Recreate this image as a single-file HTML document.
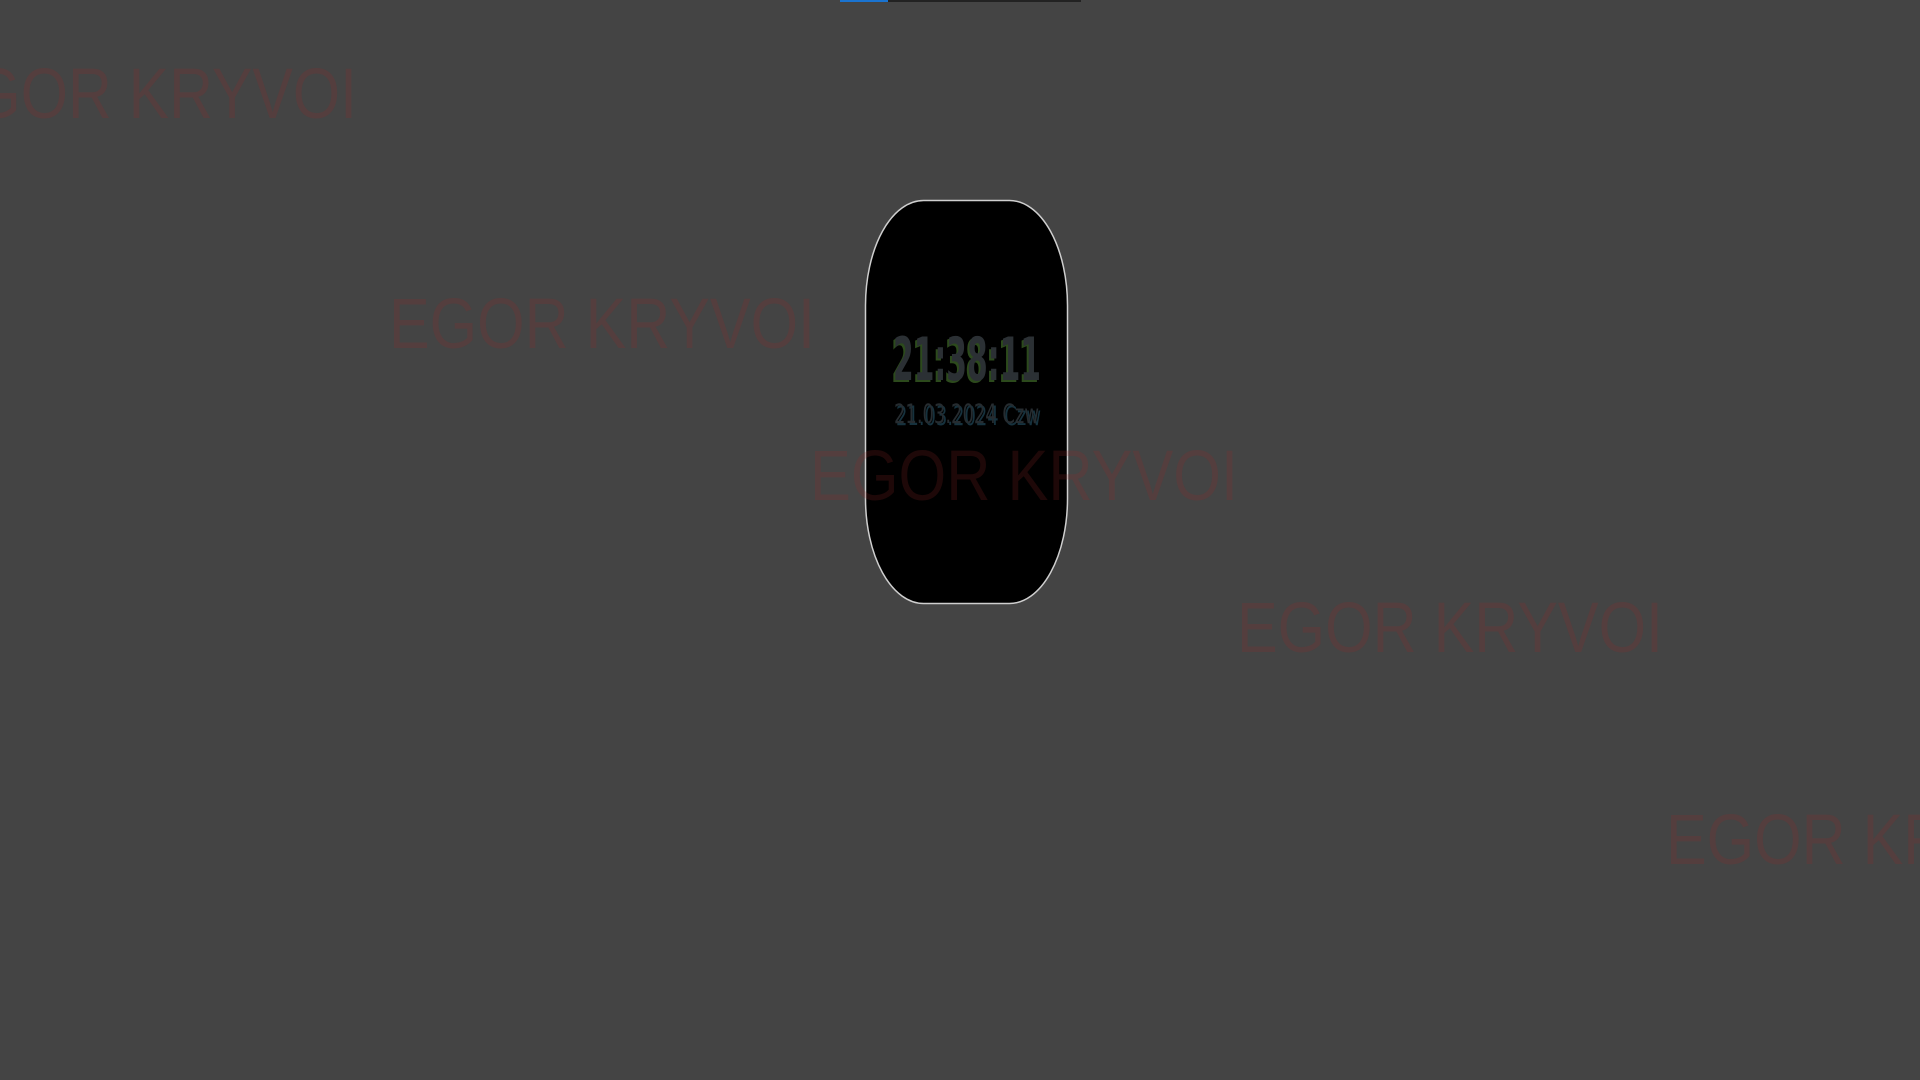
<!DOCTYPE html>
<html><head><meta charset="utf-8"><style>
html,body{margin:0;padding:0;width:1920px;height:1080px;overflow:hidden;background:#444444;}
svg{position:absolute;left:0;top:0}
</style></head><body>
<svg width="1920" height="1080" viewBox="0 0 1920 1080">
<rect x="840" y="0" width="241" height="2" fill="#222"/>
<rect x="840" y="0" width="48" height="2" fill="#1a73d0"/>
<g font-family="Liberation Sans, sans-serif" font-size="71" fill="rgba(150,40,40,0.2)">
<text x="-67" y="118" textLength="424" lengthAdjust="spacingAndGlyphs">EGOR KRYVOI</text>
<text x="389" y="348" textLength="426" lengthAdjust="spacingAndGlyphs">EGOR KRYVOI</text>
<text x="1237" y="652" textLength="426" lengthAdjust="spacingAndGlyphs">EGOR KRYVOI</text>
<text x="1666" y="864" textLength="426" lengthAdjust="spacingAndGlyphs">EGOR KRYVOI</text>
</g>
<rect x="865.5" y="200.5" width="202" height="403" rx="58" ry="105" fill="#000" stroke="#cfcfcf" stroke-width="1.5"/>
<g font-family="DejaVu Sans Condensed, DejaVu Sans, sans-serif" font-weight="bold">
<text x="891" y="382" font-size="60" fill="#2c4a1c" textLength="148" lengthAdjust="spacingAndGlyphs">21:38:11</text>
<text x="893" y="380" font-size="60" fill="#2b3034" textLength="148" lengthAdjust="spacingAndGlyphs">21:38:11</text>
</g>
<g font-family="DejaVu Sans Condensed, DejaVu Sans, sans-serif">
<text x="896" y="425" font-size="27" fill="#16323e" textLength="145" lengthAdjust="spacingAndGlyphs">21.03.2024 Czw</text>
<text x="894" y="423" font-size="27" fill="#262c30" textLength="145" lengthAdjust="spacingAndGlyphs">21.03.2024 Czw</text>
</g>
<text x="810" y="500" font-family="Liberation Sans, sans-serif" font-size="71" fill="rgba(150,40,40,0.2)" textLength="428" lengthAdjust="spacingAndGlyphs">EGOR KRYVOI</text>
</svg>
</body></html>
